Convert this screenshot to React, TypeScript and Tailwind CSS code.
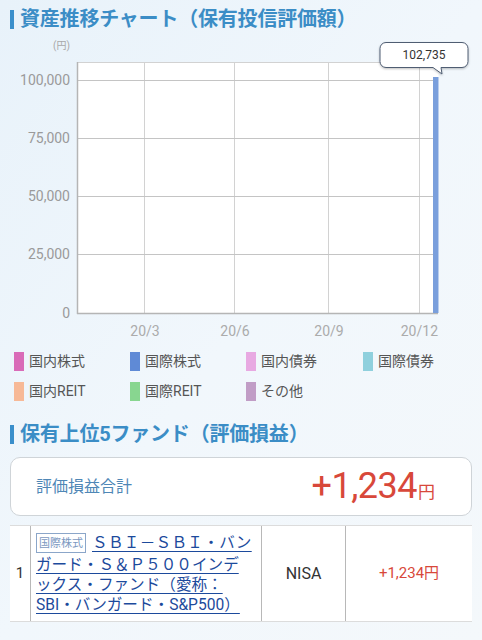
import React from 'react';

const font = "font-['Roboto','Noto_Sans_CJK_JP',sans-serif]";

const legend = [
  { label: '国内株式', color: 'bg-[#d96bb8]' },
  { label: '国際株式', color: 'bg-[#5f8ad6]' },
  { label: '国内債券', color: 'bg-[#e8a9e2]' },
  { label: '国際債券', color: 'bg-[#8fd0dd]' },
  { label: '国内REIT', color: 'bg-[#f7b997]' },
  { label: '国際REIT', color: 'bg-[#88d690]' },
  { label: 'その他', color: 'bg-[#c19dc6]' },
];

function SectionTitle({ children }: { children: React.ReactNode }) {
  return (
    <div className="flex items-center px-[10px]">
      <div className="w-[4px] h-[19px] bg-[#3a8fcb]" />
      <h2 className="ml-[6px] text-[20px] leading-[24px] font-bold text-[#3b8dc6] tracking-[-0.2px]">{children}</h2>
    </div>
  );
}

function Chart() {
  const yTicks = [
    { v: '100,000', y: 80 },
    { v: '75,000', y: 138 },
    { v: '50,000', y: 196 },
    { v: '25,000', y: 254 },
    { v: '0', y: 313 },
  ];
  const xTicks = [
    { v: '20/3', x: 144 },
    { v: '20/6', x: 234 },
    { v: '20/9', x: 328 },
    { v: '20/12', x: 419 },
  ];
  return (
    <svg width="482" height="311" viewBox="0 31 482 311" className="block">
      <defs>
        <filter id="tipShadow" x="-20%" y="-40%" width="140%" height="180%">
          <feDropShadow dx="0" dy="1" stdDeviation="1.2" floodColor="#000" floodOpacity="0.25" />
        </filter>
      </defs>
      <text x="70" y="49" textAnchor="end" fontSize="10" fill="#a8a8a8">(円)</text>
      <rect x="77.5" y="62.5" width="361" height="250.5" fill="#fff" />
      {xTicks.map((t) => (
        <line key={t.x} x1={t.x + 0.5} y1="62" x2={t.x + 0.5} y2="313" stroke="#d2d2d2" strokeWidth="1" />
      ))}
      <line x1="77" y1="62.5" x2="438" y2="62.5" stroke="#d2d2d2" strokeWidth="1" />
      {yTicks.map((t) => (
        <g key={t.v}>
          <line x1="77" y1={t.y + 0.5} x2="438" y2={t.y + 0.5} stroke={t.v === '0' ? '#b5b5b5' : '#c4c4c4'} strokeWidth={t.v === '0' ? 1.5 : 1} />
          <text x="70" y={t.y + 5} textAnchor="end" fontSize="14" fill="#9a9a9a">{t.v}</text>
        </g>
      ))}
      <line x1="77.5" y1="62" x2="77.5" y2="314" stroke="#b5b5b5" strokeWidth="1.5" />
      {xTicks.map((t) => (
        <text key={t.v} x={t.v === '20/12' ? 438 : t.x + 1} y="336" textAnchor={t.v === '20/12' ? 'end' : 'middle'} fontSize="14" fill="#ababab">{t.v}</text>
      ))}
      <rect x="433" y="77" width="5.5" height="236" fill="#7a9fdc" />
      <g filter="url(#tipShadow)">
        <path d="M386 42.5 H462 A6 6 0 0 1 468 48.5 V61.5 A6 6 0 0 1 462 67.5 H441 L442 74 L433 67.5 H386 A6 6 0 0 1 380 61.5 V48.5 A6 6 0 0 1 386 42.5 Z" fill="#fff" stroke="#4f5d72" strokeWidth="1" />
      </g>
      <text x="424" y="59" textAnchor="middle" fontSize="12" fill="#333">102,735</text>
    </svg>
  );
}

export default function App() {
  return (
    <div className={`w-[482px] h-[640px] overflow-hidden bg-gradient-to-br from-[#e8f2fa] via-[#f1f7fc] to-[#f4f8fb] ${font}`}>
      <div className="pt-[7px]">
        <SectionTitle>資産推移チャート（保有投信評価額）</SectionTitle>
      </div>
      <Chart />
      <div className="grid grid-cols-[116px_116px_117px_116px] gap-y-[11px] pl-[14px] mt-[10px]">
        {legend.map((l) => (
          <div key={l.label} className="flex items-center h-[19px]">
            <span className={`w-[10px] h-[19px] ${l.color}`} />
            <span className="ml-[5px] text-[14px] leading-[19px] text-[#555]">{l.label}</span>
          </div>
        ))}
      </div>
      <div className="mt-[21px]">
        <SectionTitle>保有上位5ファンド（評価損益）</SectionTitle>
      </div>
      <div className="mx-[10px] mt-[11px] h-[59px] rounded-[10px] border border-[#cfd4d8] bg-white flex items-center justify-between pl-[25px] pr-[36px]">
        <span className="text-[16px] text-[#4f87b6]">評価損益合計</span>
        <span className="text-[#d8483a] flex items-baseline">
          <span className="text-[36px] leading-none tracking-[-0.5px]">+1,234</span>
          <span className="text-[17px] ml-[1px]">円</span>
        </span>
      </div>
      <div className="mx-[10px] mt-[9px] flex bg-white border-t border-b border-[#dcdcdc] h-[97px]">
        <div className="w-[21px] flex items-center justify-center text-[15px] text-[#333] border-r border-[#b8b8b8]">1</div>
        <div className="w-[231px] pl-[5px] pt-[5px] border-r border-[#b8b8b8] text-[15.6px] leading-[20px] text-[#1c4a9c] whitespace-nowrap">
          <div className="flex items-center h-[24px]">
            <span className="inline-flex items-center h-[20px] px-[2px] border border-[#8ba6c9] text-[11px] text-[#7b98bf] mr-[6px] leading-none">国際株式</span>
            <span className="underline underline-offset-[3px] tracking-[0.3px]">ＳＢＩ－ＳＢＩ・バン</span>
          </div>
          <div><span className="underline underline-offset-[3px]">ガード・Ｓ＆Ｐ５００インデ</span></div>
          <div><span className="underline underline-offset-[3px]">ックス・ファンド（愛称：</span></div>
          <div><span className="underline underline-offset-[3px]">SBI・バンガード・S&amp;P500）</span></div>
        </div>
        <div className="w-[84px] flex items-center justify-center text-[16px] text-[#333] border-r border-[#b8b8b8]">NISA</div>
        <div className="flex-1 flex items-center justify-center text-[15px] text-[#d8483a]">+1,234円</div>
      </div>
    </div>
  );
}
